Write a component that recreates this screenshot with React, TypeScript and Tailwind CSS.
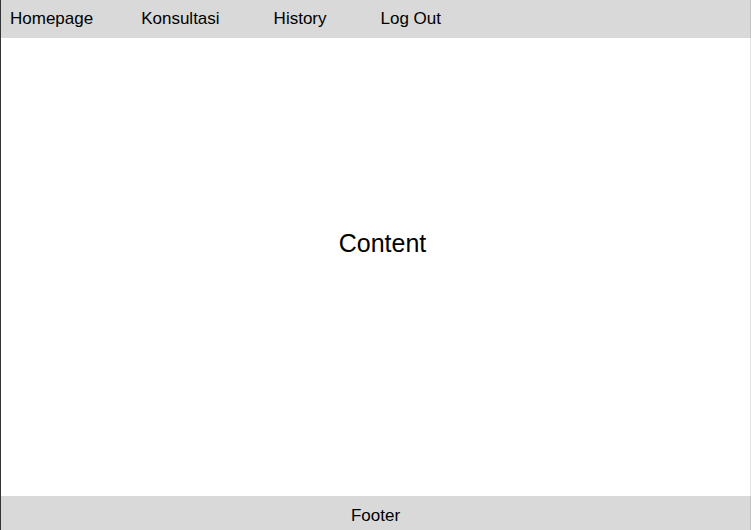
const links = [
  { label: "Homepage", gap: "" },
  { label: "Konsultasi", gap: "ml-12" },
  { label: "History", gap: "ml-[54px]" },
  { label: "Log Out", gap: "ml-[54px]" },
];

export default function App() {
  return (
    <div className="flex min-h-screen flex-col border-l border-[#333333] bg-white font-['Liberation_Sans',Arial,sans-serif] text-black">
      <header className="border-r border-[#c4c4c4] bg-[#d9d9d9]">
        <nav className="flex h-[38px] items-center pl-[9px] text-[17px] leading-6">
          {links.map(({ label, gap }) => (
            <a key={label} href="#" className={gap}>
              {label}
            </a>
          ))}
        </nav>
      </header>
      <main className="flex flex-1 items-center justify-center border-r border-[#e2e2e2] pb-12 pl-[14px]">
        <h1 className="text-[25px] leading-8">Content</h1>
      </main>
      <footer className="border-r border-[#c4c4c4] bg-[#d9d9d9] pt-2 pb-0.5 text-center text-[17px] leading-6">
        Footer
      </footer>
    </div>
  );
}
